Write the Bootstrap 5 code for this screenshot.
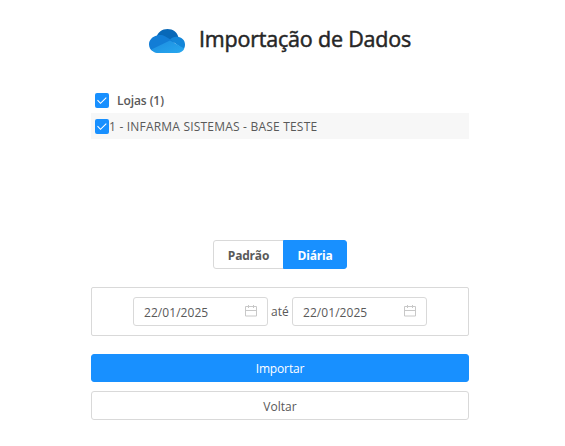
<!DOCTYPE html>
<html lang="pt-BR">
<head>
<meta charset="utf-8">
<meta name="viewport" content="width=device-width, initial-scale=1">
<title>Importação de Dados</title>
<link href="https://cdn.jsdelivr.net/npm/bootstrap@5.3.0/dist/css/bootstrap.min.css" rel="stylesheet">
<style>
body{font-family:"Segoe UI","Open Sans","Noto Sans",sans-serif;font-size:12px;line-height:20px;color:#595959;background:#fff;overflow:hidden}
.import-page{width:378px;margin-left:91px;padding-top:22px}
.page-title{height:36px;gap:13px;padding-left:57px}
.page-title svg{margin-top:2px}
.page-title h1{font-size:21.5px;line-height:34px;padding-bottom:2px;font-weight:500;letter-spacing:-.2px;color:#262626;-webkit-text-stroke:.5px #262626;white-space:nowrap}
.stores{height:149px;margin-top:30px}
.stores label{height:26px;padding-left:4px;white-space:nowrap}
.stores .store-all{height:25px;font-weight:600;letter-spacing:-.08px}
.store-item{background:#f7f7f7}
.store-item span{letter-spacing:.2px;padding-top:1px}
.stores .form-check-input{width:14px;height:15px;margin:0;border-radius:2px;border:0;background-color:#1890ff;background-size:14px 15px;background-image:url("data:image/svg+xml,%3Csvg xmlns='http://www.w3.org/2000/svg' viewBox='0 0 14 15'%3E%3Cpath d='M2.500 7.200 5.500 10.300 11.300 4.700' fill='none' stroke='white' stroke-width='1.100'/%3E%3C/svg%3E")}
.mode .btn,.actions .btn{--bs-btn-font-size:12px;--bs-btn-line-height:20px;--bs-btn-border-radius:3px;--bs-btn-color:#595959;--bs-btn-border-color:#d9d9d9;height:29px;padding:4px 0 2px}
.mode{margin-top:3px;height:29px}
.mode .btn{font-weight:700;width:71px;letter-spacing:-.2px}
.mode .btn-primary{width:64px;margin-left:-1px}
.mode .btn-primary,.actions .btn-primary{--bs-btn-color:#fff;--bs-btn-bg:#1890ff;--bs-btn-border-color:#1890ff}
.period{height:49px;margin-top:18px;border:1px solid #d9d9d9;border-radius:2px;gap:4px}
.date-field{width:135px;height:29px;border:1px solid #d9d9d9;border-radius:3px;padding:0 10px}
.date-field span{letter-spacing:.06px;padding-top:2px}
.date-field svg{margin-bottom:2px}
.until{width:16px;white-space:nowrap;margin-left:-1px;margin-right:1px;padding-top:1px}
.actions{margin-top:18px;gap:9px}
.actions .btn-primary{height:28px;letter-spacing:-.15px}
</style>
</head>
<body>
<main class="import-page d-flex flex-column">
  <header class="page-title d-flex align-items-center">
    <svg width="38" height="26" viewBox="0 0 38 26" class="flex-shrink-0" aria-hidden="true">
      <defs>
        <linearGradient id="base" x2="1" y2="1"><stop stop-color="#1c8de0"/><stop offset="1" stop-color="#28a8ef"/></linearGradient>
      </defs>
      <path d="M8 10C10 4 14 1 19.500 1c5.500 0 10 3.300 11 8.500L24 15 9 9Z" fill="#0868b8"/>
      <path d="M9 7.500c3-1 6-.4 8 .8l10 6L4.500 23C2.500 21.800 1 19.500 1 16.500 1 12 4.400 8.400 9 7.500Z" fill="#127dd6"/>
      <path d="M22 11.500c2-2 4.500-3 7-2.700 5 .4 8 3.500 8 7.700 0 2-.5 3.500-1.500 5L22 11.500Z" fill="#1386d9"/>
      <path d="M22 12.500 3.300 21.500C4.800 23.800 6.800 25 9 25h20c3.500 0 6-1.600 7.300-4.500L22 12.500Z" fill="url(#base)"/>
    </svg>
    <h1 class="m-0">Importação de Dados</h1>
  </header>
  <section class="stores">
    <label class="store-all d-flex align-items-center"><input class="form-check-input" type="checkbox" checked><span class="ms-2">Lojas (1)</span></label>
    <label class="store-item d-flex align-items-center"><input class="form-check-input" type="checkbox" checked><span>1 - INFARMA SISTEMAS - BASE TESTE</span></label>
  </section>
  <div class="mode btn-group align-self-center">
    <button class="btn flex-grow-0" type="button">Padrão</button>
    <button class="btn btn-primary flex-grow-0" type="button">Diária</button>
  </div>
  <section class="period d-flex align-items-center justify-content-center">
    <div class="date-field d-flex align-items-center justify-content-between"><span>22/01/2025</span>
      <svg width="12" height="12" viewBox="0 0 12 12" fill="none" stroke="#c8c8c8" aria-hidden="true"><path d="M.5 1.500h11v9.500H.5ZM.5 5.500h11M3.500 0v3M8.500 0v3"/></svg></div>
    <span class="until">até</span>
    <div class="date-field d-flex align-items-center justify-content-between"><span>22/01/2025</span>
      <svg width="12" height="12" viewBox="0 0 12 12" fill="none" stroke="#c8c8c8" aria-hidden="true"><path d="M.5 1.500h11v9.500H.5ZM.5 5.500h11M3.500 0v3M8.500 0v3"/></svg></div>
  </section>
  <div class="actions d-flex flex-column">
    <button class="btn btn-primary" type="button">Importar</button>
    <button class="btn" type="button">Voltar</button>
  </div>
</main>
<script src="https://cdn.jsdelivr.net/npm/bootstrap@5.3.0/dist/js/bootstrap.bundle.min.js"></script>
</body>
</html>
